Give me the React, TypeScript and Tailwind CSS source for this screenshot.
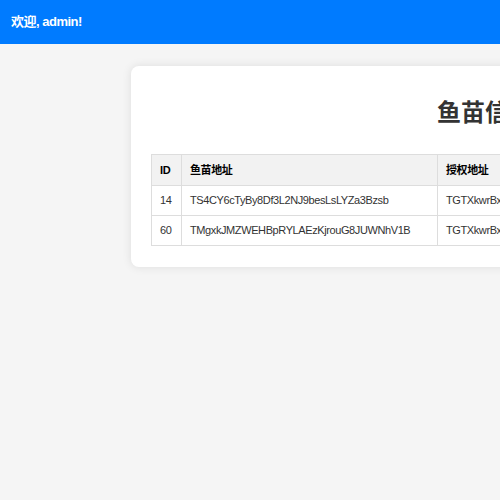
const rows = [
  {
    id: 14,
    fry: 'TS4CY6cTyBy8Df3L2NJ9besLsLYZa3Bzsb',
    auth: 'TGTXkwrBxJ4sGrZ7tV8mPq2nLdH5eYcWuF',
  },
  {
    id: 60,
    fry: 'TMgxkJMZWEHBpRYLAEzKjrouG8JUWNhV1B',
    auth: 'TGTXkwrBxJ4sGrZ7tV8mPq2nLdH5eYcWuF',
  },
]

const font = { fontFamily: '"Liberation Sans", Arial, "Noto Sans CJK SC", sans-serif' }

export default function App() {
  return (
    <div className="w-screen h-screen overflow-hidden bg-[#f5f5f5]" style={font}>
      <header className="h-11 bg-[#007bff] flex items-center px-[11px]">
        <span className="text-white font-bold text-[13px] tracking-[-0.5px]">欢迎, admin!</span>
      </header>
      <main className="pt-[22px] pl-[131px]">
        <div className="w-[756px] shrink-0 bg-white rounded-lg shadow-[0_0_10px_rgba(0,0,0,0.1)] px-5 pt-5 pb-[21px]">
          <h2 className="mt-[11px] mb-[25px] h-8 leading-8 text-center text-[24px] font-bold text-[#333]">
            鱼苗信息列表
          </h2>
          <table className="w-full table-fixed border-collapse text-[11px] tracking-[-0.4px] text-[#333]">
            <thead>
              <tr className="h-[31px] bg-[#f2f2f2]">
                <th className="w-[30px] border border-[#ddd] px-2 text-left font-bold text-black">ID</th>
                <th className="w-[256px] border border-[#ddd] px-2 text-left font-bold text-black">鱼苗地址</th>
                <th className="border border-[#ddd] px-2 text-left font-bold text-black">授权地址</th>
              </tr>
            </thead>
            <tbody>
              {rows.map((r) => (
                <tr key={r.id} className="h-[30px]">
                  <td className="border border-[#ddd] px-2 whitespace-nowrap">{r.id}</td>
                  <td className="border border-[#ddd] px-2 whitespace-nowrap">{r.fry}</td>
                  <td className="border border-[#ddd] px-2 whitespace-nowrap">{r.auth}</td>
                </tr>
              ))}
            </tbody>
          </table>
        </div>
      </main>
    </div>
  )
}
